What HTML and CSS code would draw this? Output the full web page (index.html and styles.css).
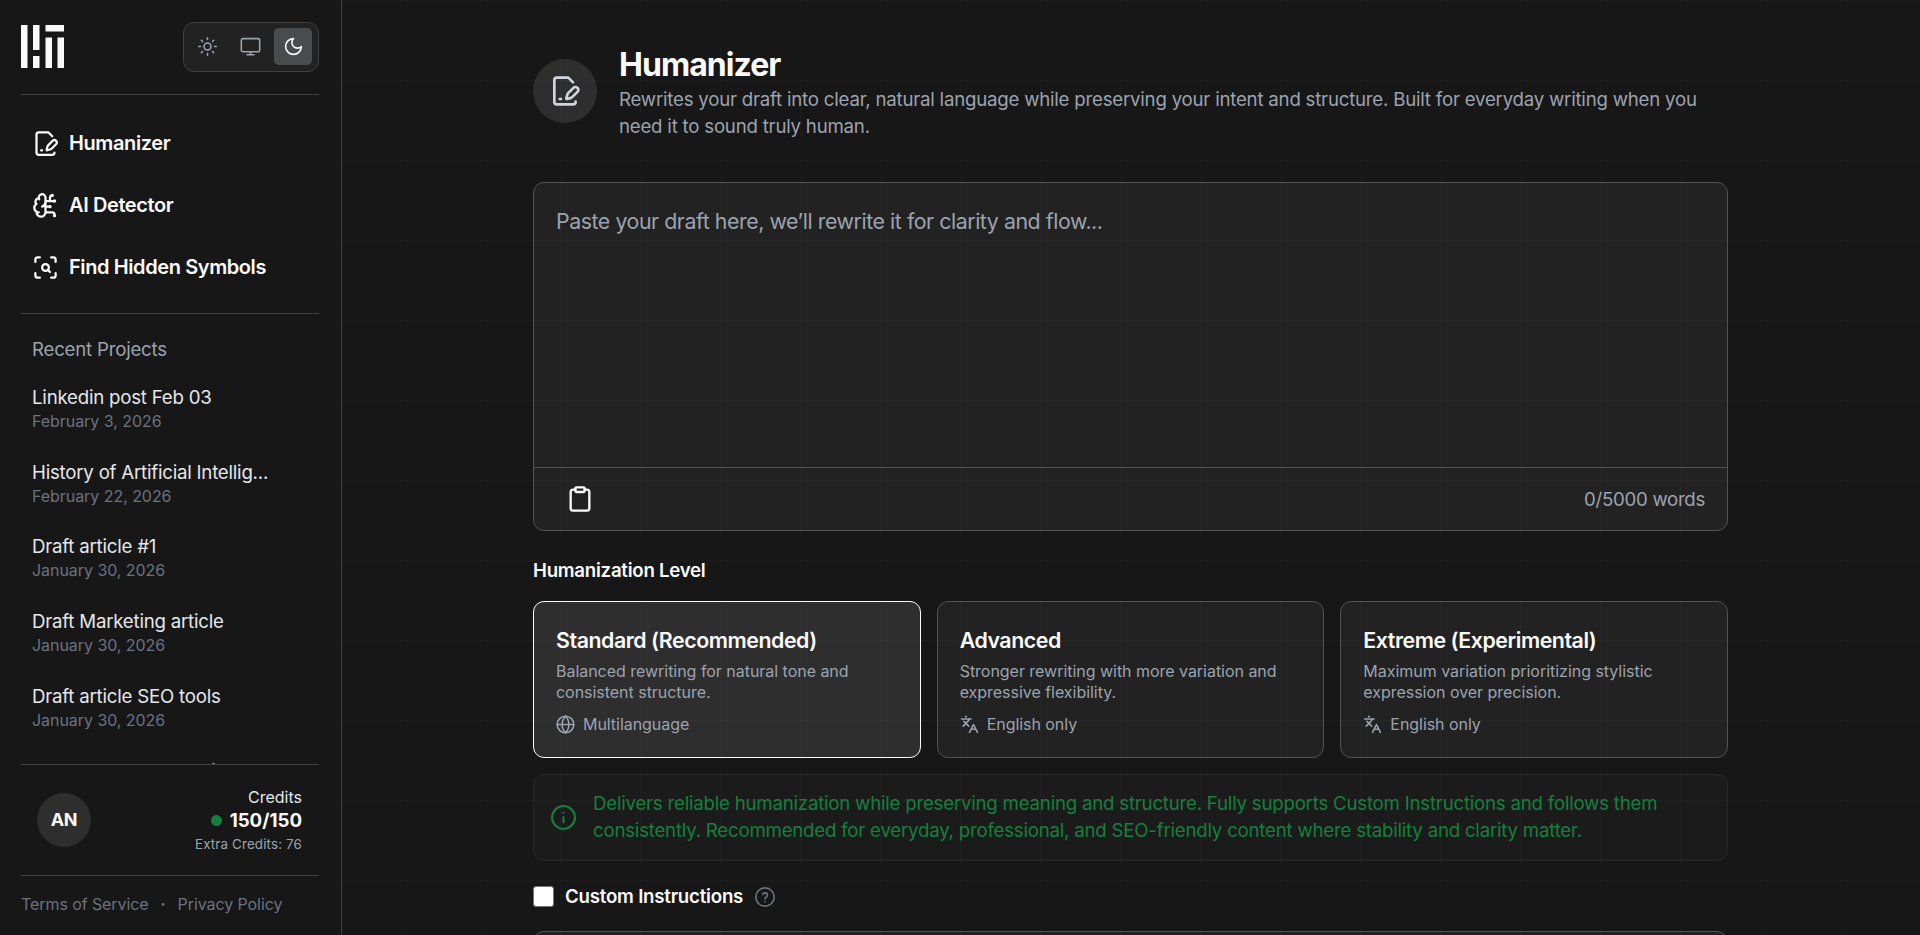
FILE: index.html
```html
<!DOCTYPE html>
<html lang="en">
<head>
    <meta charset="UTF-8">
    <meta name="viewport" content="width=device-width, initial-scale=1.0">
    <title>Humanizer</title>
    <link rel="stylesheet" href="styles.css">
</head>
<body>
    <!-- shared icons -->
    <svg class="sprite">
        <symbol id="icon-edit" viewBox="0 0 24 24">
            <path d="M18 5.5 14.5 2H6a2 2 0 0 0-2 2v16a2 2 0 0 0 2 2h12a2 2 0 0 0 2-2"/>
            <path d="M21.378 12.626a1 1 0 0 0-3.004-3.004l-4.01 4.012a2 2 0 0 0-.506.854l-.837 2.87a.5.5 0 0 0 .62.62l2.87-.837a2 2 0 0 0 .854-.506z"/>
            <path d="M8 18h1"/>
        </symbol>
        <symbol id="icon-lang" viewBox="0 0 24 24">
            <path d="m5 8 6 6M4 14l6-6 2-3M2 5h12M7 2h1M22 22l-5-10-5 10M14 18h6"/>
        </symbol>
    </svg>

    <div class="app">
        <aside class="sidebar">
            <div class="brand-row">
                <svg class="logo" viewBox="0 0 43 43">
                    <path d="M0 0h6.5v43H0zM12 0h6.5v25H12zM12 31h6.5v12H12zM24.5 0H43v6.5H24.5zM24.5 12.5H31V43h-6.5zM36.5 12.5H43V43h-6.5z"/>
                </svg>
                <div class="theme-toggle">
                    <button class="theme-btn">
                        <svg class="icon" viewBox="0 0 24 24"><circle cx="12" cy="12" r="4"/><path d="M12 2v2M12 20v2M4.930 4.930l1.410 1.410M17.660 17.660l1.410 1.410M2 12h2M20 12h2M6.340 17.660l-1.410 1.410M19.070 4.930l-1.410 1.410"/></svg>
                    </button>
                    <button class="theme-btn">
                        <svg class="icon" viewBox="0 0 24 24"><rect x="1.500" y="3" width="21" height="15" rx="2"/><path d="M8 21.500h8M12 18v3.500"/></svg>
                    </button>
                    <button class="theme-btn active">
                        <svg class="icon" viewBox="0 0 24 24"><path d="M12 3a6 6 0 0 0 9 9 9 9 0 1 1-9-9"/></svg>
                    </button>
                </div>
            </div>

            <nav class="nav">
                <a class="nav-item"><svg class="icon"><use href="#icon-edit"/></svg>Humanizer</a>
                <a class="nav-item">
                    <svg class="icon" viewBox="0 0 24 24"><path d="M12 5a3 3 0 1 0-5.997.125 4 4 0 0 0-2.526 5.770 4 4 0 0 0 .556 6.588A4 4 0 1 0 12 18zM9 13a4.500 4.500 0 0 0 3-4M6.003 5.125A3 3 0 0 0 6.401 6.500M3.477 10.896a4 4 0 0 1 .585-.396M6 18a4 4 0 0 1-1.967-.516M12 13h4M12 18h6a2 2 0 0 1 2 2v1M12 8h8M16 8V5a2 2 0 0 1 2-2"/><circle cx="16" cy="13" r=".5"/><circle cx="18" cy="3" r=".5"/><circle cx="20" cy="21" r=".5"/><circle cx="20" cy="8" r=".5"/></svg>
                    AI Detector
                </a>
                <a class="nav-item">
                    <svg class="icon" viewBox="0 0 24 24"><path d="M3 7V5a2 2 0 0 1 2-2h2M17 3h2a2 2 0 0 1 2 2v2M21 17v2a2 2 0 0 1-2 2h-2M7 21H5a2 2 0 0 1-2-2v-2M16 16l-1.900-1.900"/><circle cx="12" cy="12" r="3"/></svg>
                    Find Hidden Symbols
                </a>
            </nav>

            <section class="recent">
                <h2>Recent Projects</h2>
                <div class="project"><b>Linkedin post Feb 03</b><span>February 3, 2026</span></div>
                <div class="project"><b>History of Artificial Intellig...</b><span>February 22, 2026</span></div>
                <div class="project"><b>Draft article #1</b><span>January 30, 2026</span></div>
                <div class="project"><b>Draft Marketing article</b><span>January 30, 2026</span></div>
                <div class="project"><b>Draft article SEO tools</b><span>January 30, 2026</span></div>
                <div class="project"><b>Students and Searching</b></div>
            </section>

            <div class="account">
                <div class="avatar">AN</div>
                <div class="credits">
                    <div class="credits-label">Credits</div>
                    <div class="credits-count"><i></i>150/150</div>
                    <div class="credits-extra">Extra Credits: 76</div>
                </div>
            </div>

            <footer class="legal"><a>Terms of Service</a><span>•</span><a>Privacy Policy</a></footer>
        </aside>

        <main class="main">
            <div class="content">
                <header class="page-head">
                    <div class="head-icon"><svg class="icon"><use href="#icon-edit"/></svg></div>
                    <div class="head-text">
                        <h1>Humanizer</h1>
                        <p>Rewrites your draft into clear, natural language while preserving your intent and structure. Built for everyday writing when you<br>need it to sound truly human.</p>
                    </div>
                </header>

                <div class="editor">
                    <div class="editor-text">Paste your draft here, we’ll rewrite it for clarity and flow...</div>
                    <div class="editor-bar">
                        <svg class="icon" viewBox="0 0 24 24"><rect x="8" y="2" width="8" height="4" rx="1"/><path d="M16 4h2a2 2 0 0 1 2 2v14a2 2 0 0 1-2 2H6a2 2 0 0 1-2-2V6a2 2 0 0 1 2-2h2"/></svg>
                        <span>0/5000 words</span>
                    </div>
                </div>

                <h3 class="level-title">Humanization Level</h3>
                <div class="levels">
                    <div class="level selected">
                        <h4>Standard (Recommended)</h4>
                        <p>Balanced rewriting for natural tone and<br>consistent structure.</p>
                        <div class="lang"><svg class="icon" viewBox="0 0 24 24"><circle cx="12" cy="12" r="10.500"/><path d="M1.500 12h21M12 1.500a15 15 0 0 0 0 21 15 15 0 0 0 0-21"/></svg>Multilanguage</div>
                    </div>
                    <div class="level">
                        <h4>Advanced</h4>
                        <p>Stronger rewriting with more variation and<br>expressive flexibility.</p>
                        <div class="lang"><svg class="icon"><use href="#icon-lang"/></svg>English only</div>
                    </div>
                    <div class="level">
                        <h4>Extreme (Experimental)</h4>
                        <p>Maximum variation prioritizing stylistic<br>expression over precision.</p>
                        <div class="lang"><svg class="icon"><use href="#icon-lang"/></svg>English only</div>
                    </div>
                </div>

                <div class="note">
                    <svg class="icon" viewBox="0 0 24 24"><circle cx="12" cy="12" r="11"/><path d="M12 11.500v5M12 7.500h.01"/></svg>
                    <p>Delivers reliable humanization while preserving meaning and structure. Fully supports Custom Instructions and follows them<br>consistently. Recommended for everyday, professional, and SEO-friendly content where stability and clarity matter.</p>
                </div>

                <div class="custom">
                    <span class="checkbox"></span>
                    <label>Custom Instructions</label>
                    <svg class="icon" viewBox="0 0 24 24"><circle cx="12" cy="12" r="11"/><path d="M9.100 9a3 3 0 0 1 5.800 1c0 2-2.900 2.500-2.900 4M12 17.500h.01"/></svg>
                </div>
                <div class="custom-box"></div>
            </div>
        </main>
    </div>
</body>
</html>
```

FILE: styles.css
```css
* {
    box-sizing: border-box;
    margin: 0;
    padding: 0;
}
body {
    background: #171717;
    color: #fafafa;
    font-family: Inter, "Liberation Sans", sans-serif;
    font-size: 18.67px;
    letter-spacing: -0.22px;
    overflow: hidden;
}
.sprite {
    display: none;
}
.icon {
    fill: none;
    stroke: currentColor;
    stroke-width: 2;
    stroke-linecap: round;
    stroke-linejoin: round;
    flex: none;
}
.app {
    display: flex;
    height: 100vh;
}

/* sidebar */
.sidebar {
    width: 342px;
    flex: none;
    display: flex;
    flex-direction: column;
    padding: 0 22px 0 21px;
    border-right: 1px solid #404040;
}
.brand-row {
    display: flex;
    justify-content: space-between;
    height: 95px;
    padding-top: 22px;
    border-bottom: 1px solid #404040;
}
.logo {
    width: 43px;
    height: 43px;
    margin-top: 3px;
    fill: #fafafa;
}
.theme-toggle {
    display: flex;
    gap: 5px;
    width: 136px;
    height: 50px;
    padding: 5px 6px 6px 5px;
    border: 1px solid #404040;
    border-radius: 11px;
    background: #222;
}
.theme-btn {
    flex: 1;
    display: flex;
    align-items: center;
    justify-content: center;
    border: none;
    border-radius: 5px;
    background: none;
    color: #9ca3af;
}
.theme-btn .icon {
    width: 21px;
    height: 21px;
    stroke-width: 1.8;
}
.theme-btn.active {
    background: #4a4b4d;
    color: #fafafa;
}
.nav {
    height: 219px;
    padding: 17px 0 0 11px;
    border-bottom: 1px solid #404040;
}
.nav-item {
    display: flex;
    align-items: center;
    gap: 10px;
    height: 62px;
    font-size: 20px;
    font-weight: 600;
    letter-spacing: -0.4px;
}
.nav-item .icon {
    width: 27px;
    height: 27px;
}
.recent {
    height: 450px;
    overflow: hidden;
    padding: 22px 11px 0;
}
.recent h2 {
    font-size: 18.67px;
    font-weight: 400;
    line-height: 27px;
    color: #9ca3af;
    margin-bottom: 21px;
}
.project {
    height: 74.67px;
    white-space: nowrap;
}
.project:last-child {
    padding-top: 1px;
}
.project b {
    display: block;
    font-weight: 400;
    line-height: 27px;
    color: #e5e7eb;
}
.project span {
    display: block;
    font-size: 16px;
    line-height: 21px;
    letter-spacing: -0.05px;
    color: #6b7280;
}
.account {
    display: flex;
    justify-content: space-between;
    align-items: center;
    height: 112px;
    padding: 0 17px 0 16px;
    border-top: 1px solid #404040;
    border-bottom: 1px solid #404040;
}
.avatar {
    width: 54px;
    height: 54px;
    border-radius: 50%;
    background: #2e2e2e;
    font-weight: 700;
    font-size: 18px;
    line-height: 54px;
    text-align: center;
}
.credits {
    text-align: right;
    letter-spacing: 0;
}
.credits-label {
    font-size: 16px;
    line-height: 21px;
    color: #e5e7eb;
}
.credits-count {
    display: flex;
    align-items: center;
    justify-content: flex-end;
    gap: 8px;
    font-weight: 700;
    line-height: 26px;
}
.credits-count i {
    width: 11px;
    height: 11px;
    border-radius: 50%;
    background: #15803d;
}
.credits-extra {
    font-size: 13.33px;
    line-height: 20px;
    letter-spacing: 0.16px;
    color: #9ca3af;
}
.legal {
    display: flex;
    align-items: center;
    gap: 12px;
    height: 55px;
    font-size: 16px;
    letter-spacing: -0.08px;
    color: #6b7280;
}
.legal span {
    font-size: 9px;
}

/* main column over the 80px grid */
.main {
    flex: 1;
    background-image:
        linear-gradient(#1c1c1c 1px, transparent 1px),
        linear-gradient(90deg, #1c1c1c 1px, transparent 1px);
    background-size: 80px 80px;
    background-position: -22px 0.5px;
    overflow: hidden;
}
.content {
    width: 1195px;
    margin: 0 0 0 191px;
}
.page-head {
    display: flex;
    align-items: center;
    gap: 22px;
    height: 182px;
}
.head-icon {
    width: 64px;
    height: 64px;
    border-radius: 50%;
    background: rgba(255, 255, 255, 0.1);
    color: #d1d5db;
    display: flex;
    align-items: center;
    justify-content: center;
    flex: none;
}
.head-icon .icon {
    width: 32px;
    height: 32px;
}
.head-text {
    padding-top: 4px;
}
.page-head h1 {
    font-size: 32px;
    font-weight: 700;
    line-height: 38px;
    letter-spacing: -0.95px;
    margin-bottom: 3px;
}
.page-head p {
    line-height: 26.67px;
    color: #9ca3af;
    white-space: nowrap;
}
.editor {
    height: 349px;
    border: 1px solid #525252;
    border-radius: 11px;
    background: rgba(255, 255, 255, 0.05);
}
.editor-text {
    height: 284px;
    padding: 22px;
    font-size: 21.33px;
    line-height: 32px;
    letter-spacing: -0.44px;
    color: #9ca3af;
}
.editor-bar {
    display: flex;
    align-items: center;
    justify-content: space-between;
    height: 63px;
    padding: 0 22px 0 32px;
    border-top: 1px solid #525252;
}
.editor-bar .icon {
    width: 28px;
    height: 28px;
}
.editor-bar span {
    letter-spacing: -0.3px;
    color: #9ca3af;
}
.level-title {
    font-size: 18.67px;
    font-weight: 600;
    line-height: 27px;
    letter-spacing: -0.26px;
    margin: 26px 0 17px;
}
.levels {
    display: grid;
    grid-template-columns: repeat(3, 1fr);
    gap: 16px;
}
.level {
    height: 157px;
    padding: 22px;
    border: 1px solid #525252;
    border-radius: 11px;
    background: rgba(255, 255, 255, 0.05);
    white-space: nowrap;
}
.level.selected {
    border-color: #fafafa;
    background: rgba(255, 255, 255, 0.1);
}
.level h4 {
    font-size: 21.33px;
    font-weight: 600;
    line-height: 32px;
    letter-spacing: -0.44px;
    margin-bottom: 5px;
}
.level p {
    font-size: 16px;
    line-height: 21.33px;
    letter-spacing: -0.03px;
    color: #9ca3af;
}
.lang {
    display: flex;
    align-items: center;
    gap: 8px;
    margin-top: 10px;
    font-size: 16px;
    line-height: 21px;
    letter-spacing: -0.05px;
    color: #9ca3af;
}
.lang .icon {
    width: 19px;
    height: 19px;
}
.note {
    display: flex;
    align-items: center;
    gap: 17px;
    height: 87px;
    margin-top: 16px;
    padding: 0 17px;
    border: 1px solid #262a28;
    border-radius: 11px;
    background: rgba(255, 255, 255, 0.02);
    color: #15803d;
}
.note .icon {
    width: 25px;
    height: 25px;
}
.note p {
    line-height: 26.67px;
    white-space: nowrap;
}
.custom {
    display: flex;
    align-items: center;
    height: 27px;
    margin-top: 22px;
}
.custom label {
    font-weight: 600;
    margin: 0 12px 0 11px;
}
.custom .icon {
    width: 20px;
    height: 20px;
    color: #6b7280;
}
.checkbox {
    width: 21px;
    height: 21px;
    border: 1px solid #767676;
    border-radius: 3px;
    background: #fff;
}
.custom-box {
    height: 130px;
    margin-top: 21px;
    border: 1px solid #525252;
    border-radius: 11px;
    background: rgba(255, 255, 255, 0.05);
}
```
